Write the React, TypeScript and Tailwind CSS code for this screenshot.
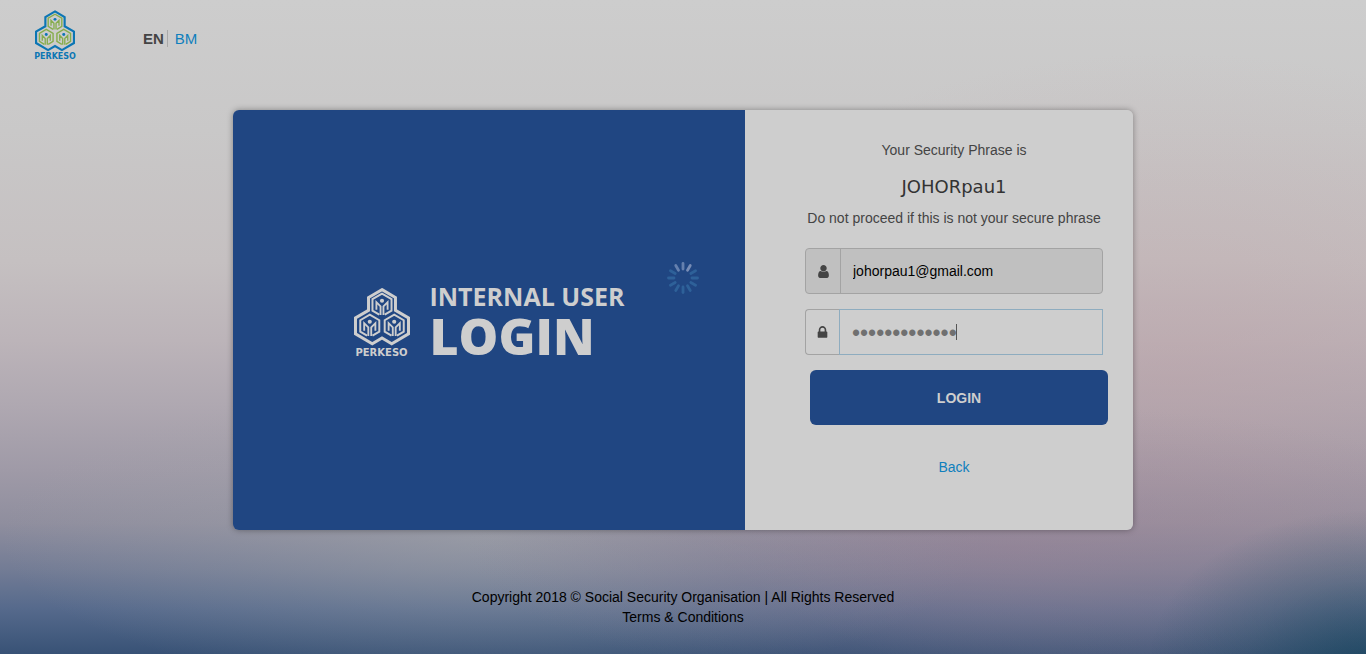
import React from "react";

type LogoProps = { className: string; outline: string; cubes: string; head: string };

const CUBES = [
  { x: 27, y: 16.3 },
  { x: 15.2, y: 36.6 },
  { x: 38.8, y: 36.6 },
];

function PerkesoMark({ className, outline, cubes, head }: LogoProps) {
  return (
    <svg viewBox="0 0 54 56" className={className} fill="none" aria-hidden="true">
      <path
        d="M27 1.6 40 9.2V21.6L52.6 28.9V44.2L36.4 53.8 27 48.3 17.6 53.8 1.4 44.2V28.9L14 21.6V9.2Z"
        stroke={outline}
        strokeWidth="2.9"
      />
      {CUBES.map((c) => (
        <g key={`${c.x}-${c.y}`} transform={`translate(${c.x} ${c.y})`}>
          <path
            d="M-2.6 9.4 -9.2 5.5V-5.5L0-10.9 9.2-5.5V5.5L2.6 9.4"
            stroke={cubes}
            strokeWidth="1.9"
          />
          <path
            d="M-1.4 9.8V1.4L-5.4-2.6V4.6M1.4 9.8V1.4L5.4-2.6V4.6"
            stroke={cubes}
            strokeWidth="1.8"
          />
          <circle cx="0" cy="-4" r="2" fill={head} />
        </g>
      ))}
    </svg>
  );
}

function Spinner() {
  return (
    <svg viewBox="-16 -16 32 32" className="size-8" aria-label="Loading">
      {Array.from({ length: 12 }, (_, i) => (
        <line
          key={i}
          x1="0"
          y1="-9"
          x2="0"
          y2="-14.5"
          stroke={i === 0 || i === 11 ? "#6580ae" : i === 1 ? "#788db6" : "#2e6199"}
          strokeWidth="2.8"
          strokeLinecap="round"
          transform={`rotate(${i * 30})`}
        />
      ))}
    </svg>
  );
}

function UserIcon() {
  return (
    <svg viewBox="0 0 1792 1792" className="size-[15px]" fill="#444" aria-hidden="true">
      <path d="M1536 1399q0 109-62.5 187t-150.5 78h-854q-88 0-150.5-78t-62.5-187q0-85 8.5-160.5t31.5-152 58.5-131 94-89 134.5-34.5q131 128 313 128t313-128q76 0 134.5 34.5t94 89 58.5 131 31.5 152 8.5 160.5zm-256-887q0 159-112.5 271.5t-271.5 112.5-271.5-112.5-112.5-271.5 112.5-271.5 271.5-112.5 271.5 112.5 112.5 271.5z" />
    </svg>
  );
}

function LockIcon() {
  return (
    <svg viewBox="0 0 1792 1792" className="size-[15px]" fill="#444" aria-hidden="true">
      <path d="M640 768h512v-192q0-106-75-181t-181-75-181 75-75 181v192zm832 96v576q0 40-28 68t-68 28h-960q-40 0-68-28t-28-68v-576q0-40 28-68t68-28h32v-192q0-184 132-316t316-132 316 132 132 316v192h32q40 0 68 28t28 68z" />
    </svg>
  );
}

function Header() {
  return (
    <header className="flex items-start pt-[10px] pl-[35px]">
      <a href="#home" className="flex w-10 flex-col items-center">
        <PerkesoMark className="h-[42px] w-10" outline="#0c76b4" cubes="#86ad4d" head="#0c76b4" />
        <span className="font-['DejaVu_Sans',sans-serif] text-[8px] leading-[10px] font-bold text-[#0c76b4]">
          PERKESO
        </span>
      </a>
      <nav className="ml-[68px] flex pt-[18px] text-[15px] leading-[21px]">
        <a href="#en" className="font-bold text-[#444]">EN</a>
        <span className="mx-[3px] my-[2px] w-px bg-[#a9a9a9]" />
        <a href="#bm" className="ml-1 text-[#0f7fbd]">BM</a>
      </nav>
    </header>
  );
}

function Brand() {
  return (
    <section className="relative flex min-w-0 flex-1 items-center justify-center bg-[#204682] text-[#cecece]">
      <div className="flex items-center gap-5 pt-[2px]">
        <div className="flex w-14 flex-col items-center gap-px pt-1">
          <PerkesoMark className="h-[58px] w-14" outline="#cecece" cubes="#cecece" head="#cecece" />
          <span className="font-['DejaVu_Sans',sans-serif] text-[10px] leading-3 font-bold">PERKESO</span>
        </div>
        <h1 className="font-['Open_Sans',sans-serif] whitespace-nowrap">
          <span className="block text-[25px] leading-[30px] font-bold">INTERNAL USER</span>
          <span className="block text-[50px] leading-[50px] font-extrabold">LOGIN</span>
        </h1>
      </div>
      <div className="absolute top-[152px] right-[46px]">
        <Spinner />
      </div>
    </section>
  );
}

function LoginForm() {
  return (
    <form
      className="flex w-[388px] shrink-0 flex-col bg-[#cecece] pt-[30px] pr-[29px] pl-[59px] text-sm"
      onSubmit={(e) => e.preventDefault()}
    >
      <p className="text-center leading-5 text-[#444]">Your Security Phrase is</p>
      <p className="mt-[15px] text-center font-['DejaVu_Sans',sans-serif] text-lg leading-6 text-[#333]">
        JOHORpau1
      </p>
      <p className="mt-[9px] text-center leading-5 whitespace-nowrap text-[#444]">
        Do not proceed if this is not your secure phrase
      </p>

      <div className="mx-px mt-5 flex h-[46px] overflow-hidden rounded border border-[#a3a3a3] bg-[#c0c0c0]">
        <label htmlFor="email" className="flex w-[35px] items-center justify-center border-r border-[#a3a3a3]">
          <UserIcon />
        </label>
        <input
          id="email"
          type="email"
          aria-label="Email"
          readOnly
          defaultValue="johorpau1@gmail.com"
          className="min-w-0 flex-1 bg-transparent px-3 text-sm text-black outline-none"
        />
      </div>

      <div className="mx-px mt-[15px] flex h-[46px]">
        <label
          htmlFor="password"
          className="flex w-[34px] items-center justify-center rounded-l border border-r-0 border-[#a3a3a3]"
        >
          <LockIcon />
        </label>
        <div className="relative flex min-w-0 flex-1 border border-[#8eacbf]">
          <input
            id="password"
            type="password"
            aria-label="Password"
            defaultValue="abcdefghijklm"
            className="min-w-0 flex-1 bg-transparent px-3 pt-[2px] text-[23px] text-[#707070] outline-none"
          />
          <span className="absolute top-[14px] left-[116px] h-4 w-px bg-[#555]" />
        </div>
      </div>

      <button
        type="submit"
        className="mt-[15px] -mr-1 ml-[6px] h-[55px] rounded-md bg-[#204682] text-sm font-bold text-[#cecece]"
      >
        LOGIN
      </button>
      <a href="#back" className="mt-8 self-center leading-5 text-[#0f7fbd]">
        Back
      </a>
    </form>
  );
}

export default function App() {
  return (
    <div className="flex min-h-screen flex-col bg-[radial-gradient(ellipse_16%_24%_at_100%_102%,rgba(20,68,92,0.7),rgba(20,68,92,0.25)_55%,transparent),radial-gradient(ellipse_40%_22%_at_74%_84%,rgba(152,128,148,0.5),rgba(152,128,148,0.2)_60%,transparent),radial-gradient(ellipse_36%_24%_at_36%_82%,rgba(165,168,172,0.55),rgba(165,168,172,0.22)_55%,transparent),radial-gradient(ellipse_40%_50%_at_86%_58%,rgba(190,160,165,0.45),transparent),linear-gradient(180deg,#cdcdcd_0%,#c9c8c8_20%,#c5c0c1_40%,#bcb4b9_52%,#afa8b1_62%,#9f9aa7_72%,#8f8e9e_80%,#737c95_87%,#566a8c_93%,#385276_100%)] font-['Liberation_Sans',Arial,sans-serif]">
      <Header />
      <main className="mt-[48px] px-4">
        <div className="mx-auto flex min-h-[420px] max-w-[900px] overflow-hidden rounded-md shadow-[0_0_6px_rgba(0,0,0,0.35)]">
          <Brand />
          <LoginForm />
        </div>
      </main>
      <footer className="mt-[57px] pb-[27px] text-center text-sm leading-5 text-black">
        <p>Copyright 2018 © Social Security Organisation | All Rights Reserved</p>
        <a href="#terms">Terms &amp; Conditions</a>
      </footer>
    </div>
  );
}
